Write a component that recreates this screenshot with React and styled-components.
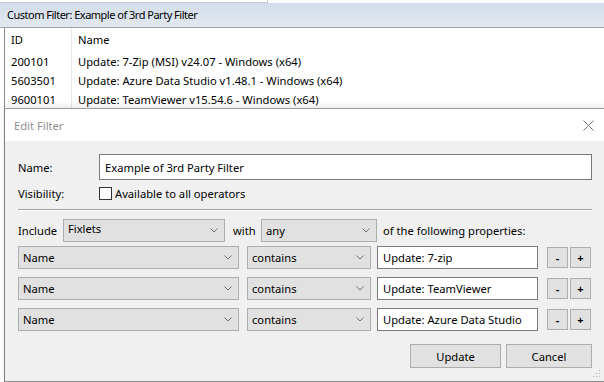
import React from 'react';
import styled, { createGlobalStyle } from 'styled-components';

const GlobalStyle = createGlobalStyle`
  html, body {
    margin: 0;
    padding: 0;
    background: #fff;
  }
  body {
    width: 604px;
    height: 382px;
    overflow: hidden;
    font-family: "Noto Sans", "Segoe UI", sans-serif;
    font-size: 11.2px;
    color: #000;
  }
`;

const Screen = styled.div`
  display: flex;
  flex-direction: column;
  height: 382px;
`;

const TopStrip = styled.div`
  height: 2px;
  border-bottom: 1px solid #c9c9c9;
  width: 267px;
  border-right: 1px solid #c9c9c9;
`;

const TitleBar = styled.div`
  height: 24px;
  line-height: 24px;
  padding-left: 7px;
  font-size: 11px;
  letter-spacing: -0.5px;
  background: linear-gradient(#d3dde9, #e2e8ef);
  border-bottom: 1px solid #a3a3a3;
`;

const ListPanel = styled.div`
  height: 80px;
  margin-left: 4px;
  border-left: 1px solid #8c8c8c;
  background: #fff;
  overflow: hidden;
`;

const ListRow = styled.div`
  display: grid;
  grid-template-columns: 67px 1fr;
  height: ${p => (p.$header ? 24 : 19)}px;
  line-height: ${p => (p.$header ? 24 : 19)}px;
`;

const Cell = styled.div`
  padding-left: 6px;
  white-space: nowrap;
  border-right: ${p => (p.$sep ? '1px solid #e3e9f1' : 'none')};
`;

const Dialog = styled.div`
  position: relative;
  flex: 1;
  margin-left: 4px;
  display: flex;
  flex-direction: column;
  border-top: 1px solid #9a9a9a;
  border-left: 1px solid #7d7d7d;
  border-bottom: 1px solid #8a8a8a;
  box-shadow: 0 -3px 6px rgba(0, 0, 0, 0.08);
`;

const DialogTitle = styled.div`
  height: 32px;
  display: flex;
  align-items: center;
  justify-content: space-between;
  padding: 0 10px 0 9px;
  background: #fff;
  color: #8f8f8f;
`;

const DialogBody = styled.div`
  flex: 1;
  background: #f0f0f0;
  padding: 13px 12px 0 13px;
  display: flex;
  flex-direction: column;
`;

const FieldRow = styled.div`
  display: flex;
  align-items: center;
  height: ${p => p.$h || 26}px;
  margin-top: ${p => p.$mt || 0}px;
`;

const Label = styled.div`
  width: 81px;
  flex: none;
`;

const TextBox = styled.div`
  box-sizing: border-box;
  height: ${p => p.$h || 26}px;
  width: ${p => (p.$w ? `${p.$w}px` : 'auto')};
  flex: ${p => (p.$w ? 'none' : 1)};
  border: 1px solid #7a7a7a;
  background: #fff;
  padding-left: 5px;
  display: flex;
  align-items: center;
  white-space: nowrap;
`;

const CheckLabel = styled.label`
  display: flex;
  align-items: center;
  gap: 3px;
`;

const CheckBox = styled.span`
  box-sizing: border-box;
  width: 13px;
  height: 13px;
  border: 1px solid #333;
  background: #fff;
`;

const Separator = styled.div`
  margin-top: 9px;
  border-top: 1px solid #a0a0a0;
  border-bottom: 1px solid #fff;
`;

const Inline = styled.span`
  box-sizing: border-box;
  flex: none;
  width: ${p => (p.$w ? `${p.$w}px` : 'auto')};
  padding-left: ${p => p.$pl || 0}px;
  white-space: nowrap;
`;

const Select = styled.div`
  box-sizing: border-box;
  width: ${p => p.$w}px;
  height: ${p => p.$h || 23}px;
  flex: none;
  margin-right: ${p => p.$mr || 0}px;
  border: 1px solid #adadad;
  background: #e1e1e1;
  padding: ${p => (p.$top ? '1px' : '0')} 6px 0 4px;
  display: flex;
  align-items: ${p => (p.$top ? 'flex-start' : 'center')};
  justify-content: space-between;
  svg {
    align-self: center;
  }
`;

const SmallButton = styled.div`
  box-sizing: border-box;
  width: 21px;
  height: 21px;
  margin-left: ${p => p.$ml}px;
  border: 1px solid #adadad;
  background: #e1e1e1;
  display: flex;
  align-items: center;
  justify-content: center;
  font-weight: bold;
  font-size: 11px;
`;

const Footer = styled.div`
  display: flex;
  justify-content: flex-end;
  gap: 5px;
  margin-top: 13px;
`;

const Button = styled.div`
  box-sizing: border-box;
  width: ${p => p.$w}px;
  height: 24px;
  border: 1px solid #adadad;
  background: #e1e1e1;
  display: flex;
  align-items: center;
  justify-content: center;
`;

const Grip = styled.svg`
  position: absolute;
  right: 3px;
  bottom: 3px;
`;

const Chevron = () => (
  <svg width="8" height="5" viewBox="0 0 8 5">
    <polyline points="0.5,0.5 4,4 7.5,0.5" fill="none" stroke="#707070" strokeWidth="1" />
  </svg>
);

const CloseIcon = () => (
  <svg width="11" height="11" viewBox="0 0 11 11">
    <path d="M0.5 0.5 L10.5 10.5 M10.5 0.5 L0.5 10.5" stroke="#777" strokeWidth="1" />
  </svg>
);

const items = [
  ['200101', 'Update: 7-Zip (MSI) v24.07 - Windows (x64)'],
  ['5603501', 'Update: Azure Data Studio v1.48.1 - Windows (x64)'],
  ['9600101', 'Update: TeamViewer v15.54.6 - Windows (x64)'],
];

const criteria = ['Update: 7-zip', 'Update: TeamViewer', 'Update: Azure Data Studio'];

export default function App() {
  return (
    <Screen>
      <GlobalStyle />
      <TopStrip />
      <TitleBar>Custom Filter: Example of 3rd Party Filter</TitleBar>
      <ListPanel>
        <ListRow $header>
          <Cell $sep>ID</Cell>
          <Cell>Name</Cell>
        </ListRow>
        {items.map(([id, name]) => (
          <ListRow key={id}>
            <Cell $sep>{id}</Cell>
            <Cell>{name}</Cell>
          </ListRow>
        ))}
      </ListPanel>
      <Dialog>
        <DialogTitle>
          <span>Edit Filter</span>
          <CloseIcon />
        </DialogTitle>
        <DialogBody>
          <FieldRow>
            <Label>Name:</Label>
            <TextBox>Example of 3rd Party Filter</TextBox>
          </FieldRow>
          <FieldRow $h={13} $mt={7}>
            <Label>Visibility:</Label>
            <CheckLabel>
              <CheckBox />
              Available to all operators
            </CheckLabel>
          </FieldRow>
          <Separator />
          <FieldRow $h={24} $mt={7}>
            <Inline $w={45}>Include</Inline>
            <Select $w={162} $top>
              Fixlets
              <Chevron />
            </Select>
            <Inline $w={36} $pl={8}>with</Inline>
            <Select $w={116}>
              any
              <Chevron />
            </Select>
            <Inline $pl={6}>of the following properties:</Inline>
          </FieldRow>
          {criteria.map((value, i) => (
            <FieldRow key={value} $h={23} $mt={i === 0 ? 4 : 8}>
              <Select $w={221} $mr={8}>
                Name
                <Chevron />
              </Select>
              <Select $w={124} $mr={6}>
                contains
                <Chevron />
              </Select>
              <TextBox $w={161} $h={23}>{value}</TextBox>
              <SmallButton $ml={9}>-</SmallButton>
              <SmallButton $ml={2}>+</SmallButton>
            </FieldRow>
          ))}
          <Footer>
            <Button $w={91}>Update</Button>
            <Button $w={86}>Cancel</Button>
          </Footer>
        </DialogBody>
        <Grip width="8" height="8" viewBox="0 0 8 8">
          <rect x="6" y="0" width="1" height="1" fill="#b5b5b5" />
          <rect x="3" y="3" width="1" height="1" fill="#b5b5b5" />
          <rect x="6" y="3" width="1" height="1" fill="#b5b5b5" />
          <rect x="0" y="6" width="1" height="1" fill="#b5b5b5" />
          <rect x="3" y="6" width="1" height="1" fill="#b5b5b5" />
          <rect x="6" y="6" width="1" height="1" fill="#b5b5b5" />
        </Grip>
      </Dialog>
    </Screen>
  );
}
